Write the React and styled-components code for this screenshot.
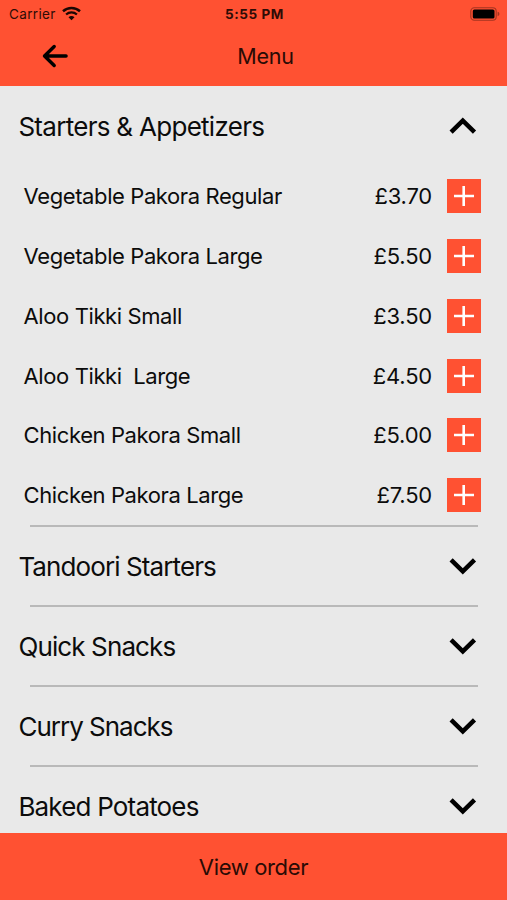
import React, { useState } from 'react'
import styled, { createGlobalStyle } from 'styled-components';


const GlobalStyle = createGlobalStyle`
  * {
    box-sizing: border-box;
  }

  body {
    margin: 0;
    background: #e9e9e9;
    color: #0c0c0c;
    font-family: Inter, "Liberation Sans", sans-serif;
  }
`

const Screen = styled.div`
  display: flex;
  flex-direction: column;
  height: 900px;
  width: 507px;
  overflow: hidden;
`

const StatusBar = styled.div`
  display: grid;
  grid-template-columns: 1fr auto 1fr;
  align-items: center;
  height: 27px;
  padding: 0 7px 0 9px;
  background: #ff5132;
  color: #2e0c06;
  flex-shrink: 0;
`

const Carrier = styled.div`
  display: flex;
  align-items: center;
  gap: 6px;
  font-size: 13.5px;
  letter-spacing: 0.35px;
`

const Time = styled.div`
  font-size: 13.5px;
  font-weight: 700;
  letter-spacing: 0.55px;
`

const Battery = styled.svg`
  justify-self: end;
`

const NavBar = styled.header`
  display: grid;
  grid-template-columns: 1fr auto 1fr;
  align-items: center;
  height: 59px;
  padding: 0 18px 2px 42px;
  background: #ff5132;
  flex-shrink: 0;
`

const BackButton = styled.button`
  display: flex;
  width: 26px;
  padding: 0;
  border: none;
  background: none;
  cursor: pointer;
`

const Title = styled.h1`
  margin: 0;
  color: #2a0b05;
  font-size: 21.5px;
  font-weight: 400;
  letter-spacing: -0.2px;
`

const MenuList = styled.main`
  flex: 1;
  min-height: 0;
  overflow: hidden;
`

const Divider = styled.div`
  height: 2px;
  margin: 0 29px 0 30px;
  background: #b9b9b9;
`

const SectionHeader = styled.div`
  display: flex;
  align-items: center;
  justify-content: space-between;
  height: ${props => props.$first ? 80.4 : 78}px;
  padding: 0 30px 0 18.4px;
  cursor: pointer;
`

const SectionName = styled.h2`
  margin: 0;
  font-size: 26px;
  font-weight: 400;
  letter-spacing: ${props => props.$tracking}px;
`

const ItemRow = styled.div`
  display: flex;
  align-items: center;
  height: 59.8px;
  padding: 0 26px 0 23.6px;
`

const ItemName = styled.span`
  flex: 1;
  font-size: 22px;
  letter-spacing: -0.4px;
  white-space: pre;
`

const Price = styled.span`
  margin-right: 15px;
  font-size: 22px;
  letter-spacing: -0.2px;
`

const AddButton = styled.button`
  display: flex;
  align-items: center;
  justify-content: center;
  width: 34px;
  height: 34px;
  padding: 0;
  border: none;
  background: #ff5132;
  cursor: pointer;
`

const OrderButton = styled.button`
  height: 67px;
  padding: 0;
  border: none;
  background: #ff5132;
  color: #2a0b05;
  font-family: inherit;
  font-size: 22px;
  letter-spacing: -0.35px;
  flex-shrink: 0;
  cursor: pointer;
`

const sections = [
  {
    name: 'Starters & Appetizers',
    tracking: -0.71,
    items: [
      { name: 'Vegetable Pakora Regular', price: '£3.70' },
      { name: 'Vegetable Pakora Large', price: '£5.50' },
      { name: 'Aloo Tikki Small', price: '£3.50' },
      { name: 'Aloo Tikki  Large', price: '£4.50' },
      { name: 'Chicken Pakora Small', price: '£5.00' },
      { name: 'Chicken Pakora Large', price: '£7.50' },
    ],
  },
  { name: 'Tandoori Starters', tracking: -0.9, items: [] },
  { name: 'Quick Snacks', tracking: -0.88, items: [] },
  { name: 'Curry Snacks', tracking: -1, items: [] },
  { name: 'Baked Potatoes', tracking: -0.82, items: [] },
];

const WifiIcon = () => (
  <svg width="19" height="15" viewBox="0 0 19 15" fill="none" stroke="#1a0703">
    <path d="M1 5.2C5.8.9 13.2.9 18 5.2" strokeWidth="2.5" />
    <path d="M4.1 8.5c3.1-2.8 7.7-2.8 10.8 0" strokeWidth="2.3" />
    <path d="M9.5 14.2 6.5 11.2c1.7-1.5 4.3-1.5 6 0z" fill="#1a0703" stroke="none" />
  </svg>
)

const BatteryIcon = () => (
  <Battery width="30" height="14" viewBox="0 0 30 14">
    <rect x="0.8" y="0.8" width="25.4" height="12.4" rx="3.5" fill="none" stroke="#a43420" strokeWidth="1.1" />
    <rect x="2.8" y="2.5" width="21.7" height="9" rx="1.6" fill="#000" />
    <path d="M27.6 4.8c2.4.6 2.4 3.8 0 4.4z" fill="#a43420" />
  </Battery>
)

const Chevron = ({ up }) => (
  <svg width="28" height="20" viewBox="0 0 28 20" fill="none" stroke="#000" strokeWidth="4.5">
    <path d={up ? 'M2.1 16.2 13.8 4.6 25.5 16.2' : 'M2.1 3.8 13.8 15.4 25.5 3.8'} />
  </svg>
)

const MenuSection = ({ section, first }) => {
  const [open, setOpen] = useState(section.items.length > 0);

  return (
    <section>
      {!first && <Divider />}
      <SectionHeader $first={first} onClick={() => setOpen(!open)}>
        <SectionName $tracking={section.tracking}>{section.name}</SectionName>
        <Chevron up={open} />
      </SectionHeader>
      {open && section.items.map((item) => (
        <ItemRow key={item.name}>
          <ItemName>{item.name}</ItemName>
          <Price>{item.price}</Price>
          <AddButton aria-label="Add">
            <svg width="20" height="20" viewBox="0 0 20 20" stroke="#fff" strokeWidth="2.6">
              <path d="M9.7 0v20M0 10h20" />
            </svg>
          </AddButton>
        </ItemRow>
      ))}
    </section>
  )
}

const App = () => {
  return (
    <>
      <GlobalStyle />
      <Screen>
        <StatusBar>
          <Carrier>
            Carrier
            <WifiIcon />
          </Carrier>
          <Time>5:55 PM</Time>
          <BatteryIcon />
        </StatusBar>
        <NavBar>
          <BackButton aria-label="Back">
            <svg width="26" height="24" viewBox="0 0 26 24" fill="none" stroke="#000" strokeWidth="3.4" strokeLinecap="round" strokeLinejoin="round">
              <path d="M12.2 2.5 2.5 12l9.7 9.5M2.5 12h21.6" />
            </svg>
          </BackButton>
          <Title>Menu</Title>
        </NavBar>
        <MenuList>
          {sections.map((section, index) => (
            <MenuSection key={section.name} section={section} first={index === 0} />
          ))}
        </MenuList>
        <OrderButton>View order</OrderButton>
      </Screen>
    </>
  )
}

export default App
